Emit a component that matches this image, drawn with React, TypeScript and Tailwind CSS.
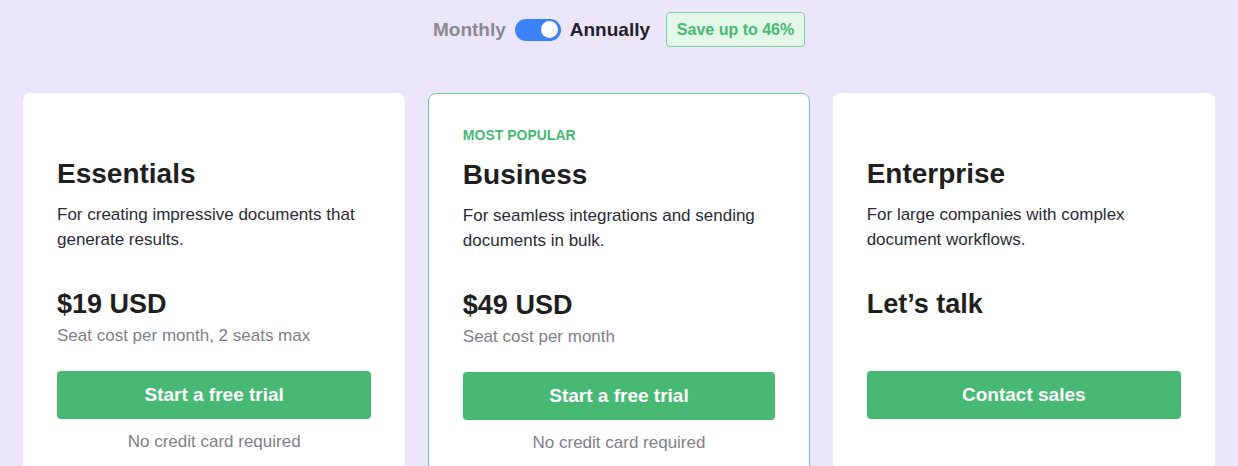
const plans = [
    {
        name: "Essentials",
        label: "",
        desc: "For creating impressive documents that generate results.",
        price: "$19 USD",
        seat: "Seat cost per month, 2 seats max",
        cta: "Start a free trial",
        note: "No credit card required",
        featured: false,
    },
    {
        name: "Business",
        label: "MOST POPULAR",
        desc: "For seamless integrations and sending documents in bulk.",
        price: "$49 USD",
        seat: "Seat cost per month",
        cta: "Start a free trial",
        note: "No credit card required",
        featured: true,
    },
    {
        name: "Enterprise",
        label: "",
        desc: "For large companies with complex document workflows.",
        price: "Let’s talk",
        seat: "",
        cta: "Contact sales",
        note: "",
        featured: false,
    },
];

export default function App() {
    return (
        <main
            className="h-[466px] w-full overflow-hidden bg-[#ece6fd] pt-[12px] text-[#1f1f24]"
            style={{fontFamily: '"Liberation Sans", Arial, sans-serif'}}
        >
            <div className="flex items-center justify-center">
                <span className="mt-[1px] text-[19px] font-bold text-[#8a8a8e]">Monthly</span>
                <div className="ml-[9px] flex h-[22px] w-[46px] items-center justify-end rounded-full bg-[#3b82f6] px-[3px]">
                    <div className="h-[17px] w-[17px] rounded-full bg-white"/>
                </div>
                <span className="mt-[1px] ml-[9px] text-[19px] font-bold text-[#1f1f2a]">Annually</span>
                <div className="ml-[16px] flex h-[35px] w-[139px] items-center justify-center rounded-[4px] border border-[#7dd3a0] bg-[#e4f8ea] pt-[1px] text-[16px] font-bold text-[#48b974]">
                    Save up to 46%
                </div>
            </div>

            <div className="mt-[46px] grid grid-cols-3 gap-[22.5px] px-[23px]">
                {plans.map((p) => (
                    <div
                        key={p.name}
                        className={
                            p.featured
                                ? "rounded-[8px] border border-[#6fcf97] bg-white px-[34px] pt-[31px] pb-[30px]"
                                : "rounded-[8px] bg-white px-[34px] pt-[31px] pb-[30px]"
                        }
                    >
                        <div className="h-[20px] text-[14px] font-bold leading-[20px] text-[#48b974]">{p.label}</div>
                        <h2 className="mt-[12px] text-[28px] font-bold leading-[36px] text-[#1f1f1f]">{p.name}</h2>
                        <p className="mt-[10px] text-[17px] leading-[25px] text-[#2b2b36]">{p.desc}</p>
                        <div className="mt-[34px] text-[27px] font-bold leading-[36px] text-[#1f1f1f]">{p.price}</div>
                        <div className="mt-[2px] h-[24px] text-[17px] leading-[24px] text-[#7f7f88]">{p.seat}</div>
                        <button className="mt-[23px] flex h-[48px] w-full items-center justify-center rounded-[4px] bg-[#48b974] text-[19px] font-bold text-white">
                            {p.cta}
                        </button>
                        <div className="mt-[11px] h-[24px] text-center text-[17px] leading-[24px] text-[#7f7f88]">{p.note}</div>
                    </div>
                ))}
            </div>
        </main>
    );
}
